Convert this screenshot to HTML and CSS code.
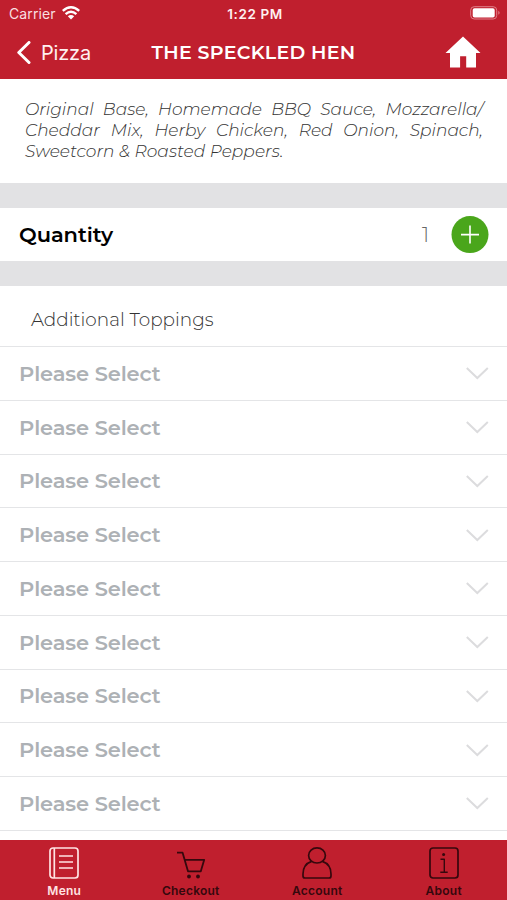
FILE: index.html
```html
<!DOCTYPE html>
<html lang="en">
<head>
<meta charset="utf-8">
<title>The Speckled Hen</title>
<link rel="stylesheet" href="styles.css">
</head>
<body>
<div class="app">
  <header class="header">
    <div class="status">
      <div class="carrier"><span class="carrier-name">Carrier</span>
        <svg class="wifi" width="18" height="14" viewBox="0 0 18 14" fill="none" stroke="#fff" stroke-width="2.5"><path d="M.8 4.9Q9-2.3 17.2 4.9M3.6 8.1Q9 3.5 14.4 8.1"/><path d="M5.8 10.3Q9 7.8 12.2 10.3L9 13.5Z" fill="#fff" stroke="none"/></svg>
      </div>
      <div class="time">1:22 PM</div>
      <svg class="battery" width="31" height="14" viewBox="0 0 31 14"><rect x=".7" y=".7" width="26" height="12.3" rx="3.5" fill="none" stroke="#e0808a"/><rect x="2.7" y="2.3" width="22" height="9.2" rx="1.8" fill="#fff"/><path d="M28.3 4.8Q31 6.8 28.3 8.8Z" fill="#e0808a"/></svg>
    </div>
    <div class="nav">
      <div class="back">
        <svg width="16" height="24" viewBox="0 0 16 24" fill="none" stroke="#fff" stroke-width="3" stroke-linecap="round" stroke-linejoin="round"><path d="M14 1.5 3.8 11.5 14 21.5"/></svg>
        <span class="back-label">Pizza</span>
      </div>
      <h1 class="title">THE SPECKLED HEN</h1>
      <svg class="home" width="36" height="32" viewBox="0 0 36 32"><path d="M18 .5 35.5 17H31V31.5H21.2V20.3h-6.1V31.5H5V17H.5Z" fill="#fff"/></svg>
    </div>
  </header>
  <main class="content">
    <div class="description">
      <div class="line">Original Base, Homemade BBQ Sauce, Mozzarella/</div>
      <div class="line">Cheddar Mix, Herby Chicken, Red Onion, Spinach,</div>
      <div class="line last">Sweetcorn &amp; Roasted Peppers.</div>
    </div>
    <div class="quantity">
      <span class="quantity-label">Quantity</span>
      <span class="quantity-value">1</span>
      <svg width="38" height="38" viewBox="0 0 38 38"><circle cx="19" cy="18.6" r="18.5" fill="#4aa61b"/><path d="M10 18.6h18M19 9.6v18" stroke="#fff" stroke-width="1.6"/></svg>
    </div>
    <h2 class="toppings"><span class="toppings-label">Additional Toppings</span></h2>
    <div class="row"><span class="select">Please Select</span><svg class="chevron" viewBox="0 0 24 14"><path d="M1.8 2 12.3 12 22.8 2"/></svg></div>
    <div class="row"><span class="select">Please Select</span><svg class="chevron" viewBox="0 0 24 14"><path d="M1.8 2 12.3 12 22.8 2"/></svg></div>
    <div class="row"><span class="select">Please Select</span><svg class="chevron" viewBox="0 0 24 14"><path d="M1.8 2 12.3 12 22.8 2"/></svg></div>
    <div class="row"><span class="select">Please Select</span><svg class="chevron" viewBox="0 0 24 14"><path d="M1.8 2 12.3 12 22.8 2"/></svg></div>
    <div class="row"><span class="select">Please Select</span><svg class="chevron" viewBox="0 0 24 14"><path d="M1.8 2 12.3 12 22.8 2"/></svg></div>
    <div class="row"><span class="select">Please Select</span><svg class="chevron" viewBox="0 0 24 14"><path d="M1.8 2 12.3 12 22.8 2"/></svg></div>
    <div class="row"><span class="select">Please Select</span><svg class="chevron" viewBox="0 0 24 14"><path d="M1.8 2 12.3 12 22.8 2"/></svg></div>
    <div class="row"><span class="select">Please Select</span><svg class="chevron" viewBox="0 0 24 14"><path d="M1.8 2 12.3 12 22.8 2"/></svg></div>
    <div class="row"><span class="select">Please Select</span><svg class="chevron" viewBox="0 0 24 14"><path d="M1.8 2 12.3 12 22.8 2"/></svg></div>
  </main>
  <nav class="tabs">
    <div class="tab active">
      <svg class="icon" viewBox="0 0 32 34"><rect x="2" y="2" width="28" height="30" rx="3"/><path d="M6.3 2v30M11 10h14M11 16h14M11 22h14"/></svg>
      <span>Menu</span>
    </div>
    <div class="tab">
      <svg class="icon" viewBox="0 0 32 34"><path d="M2 6.7h5.6L13 25.3h12.8L29.2 13.8H9.7" stroke-width="1.8"/><circle class="dot" cx="14" cy="30.5" r="1.9"/><circle class="dot" cx="23" cy="30.5" r="1.9"/></svg>
      <span>Checkout</span>
    </div>
    <div class="tab">
      <svg class="icon" viewBox="0 0 32 34"><ellipse cx="16" cy="9.4" rx="8.4" ry="7.6"/><path d="M10.6 15.4C4.5 17.5 2 23 2 28v2Q2 32 4 32H28Q30 32 30 30V28C30 23 27.5 17.5 21.4 15.4"/></svg>
      <span>Account</span>
    </div>
    <div class="tab">
      <svg class="icon" viewBox="0 0 32 34"><rect x="2" y="2" width="28" height="30" rx="3"/><circle class="dot" cx="15.6" cy="8.5" r="1.5"/><path d="M12.5 13.3h3.8V26M12.3 26.2h7.4" stroke-width="1.4"/></svg>
      <span>About</span>
    </div>
  </nav>
</div>
</body>
</html>
```
FILE: styles.css
```css
* { box-sizing: border-box; }
body { margin: 0; background: #fff; font-family: Montserrat, Inter, sans-serif; }
h1, h2 { margin: 0; }
svg { display: block; flex: none; }
span { white-space: nowrap; }
.app { width: 507px; height: 900px; display: flex; flex-direction: column; overflow: hidden; }
.header { height: 79px; background: #c01f2e; color: #fff; flex: none; }
.status { height: 26px; display: grid; grid-template-columns: 1fr auto 1fr; align-items: center; padding: 0 6px 0 9px; font: 14px/18px Inter, sans-serif; }
.carrier { display: flex; align-items: center; gap: 6px; }
.carrier-name { color: #f9dfe1; letter-spacing: .1px; padding-top: 2px; }
.time { font-size: 13.5px; font-weight: 600; letter-spacing: .6px; color: #fff0f0; padding-top: 1px; }
.battery { justify-self: end; }
.nav { height: 53px; display: grid; grid-template-columns: 1fr auto 1fr; align-items: center; padding: 0 26px 0 15px; }
.back { display: flex; align-items: center; gap: 10px; }
.back-label { font: 20px/28px Inter, sans-serif; color: #fff0f0; letter-spacing: -.2px; }
.title { padding-left: 11px; font-size: 19px; line-height: 26px; font-weight: 600; letter-spacing: .3px; white-space: nowrap; }
.home { justify-self: end; margin-top: -2px; }
.content { flex: 1; min-height: 0; overflow: hidden; }
.description { height: 104px; padding: 20px 24px 0 25px; color: #333; font-size: 17px; font-style: italic; font-weight: 300; }
.line { height: 21px; line-height: 21px; white-space: nowrap; text-align-last: justify; }
.line.last { text-align-last: left; letter-spacing: .04px; }
.quantity { height: 103px; border: solid #e2e2e4; border-width: 25px 0; display: flex; align-items: center; padding: 0 18px 0 19px; }
.quantity-label { flex: 1; font-size: 21px; font-weight: 600; color: #000; letter-spacing: -.05px; }
.quantity-value { font-size: 20px; font-weight: 300; color: #666; margin-right: 22px; }
.toppings { height: 61px; padding: 6px 0 0 31px; display: flex; align-items: center; border-bottom: 1.5px solid #e4e5e7; color: #333; font-size: 18.4px; font-weight: 300; }
.row { height: 53.75px; display: flex; align-items: center; justify-content: space-between; padding: 0 18px 0 19px; border-bottom: 1.5px solid #e4e5e7; }
.select { color: #adb1b5; font-size: 21px; font-weight: 600; letter-spacing: -.12px; }
.chevron { width: 24px; height: 14px; fill: none; stroke: #dcdcde; stroke-width: 2; }
.tabs { height: 60px; flex: none; display: grid; grid-template-columns: repeat(4, 1fr); padding: 6px 0 0 1px; background: #c01f2e; color: #35080d; }
.tab { display: flex; flex-direction: column; align-items: center; font: 600 12px/16px Inter, sans-serif; letter-spacing: .25px; }
.icon { width: 32px; height: 34px; margin-bottom: 3px; fill: none; stroke: currentColor; stroke-width: 1.7; stroke-linejoin: round; }
.dot { fill: currentColor; stroke: none; }
.active { color: #ffe3e3; }
```
